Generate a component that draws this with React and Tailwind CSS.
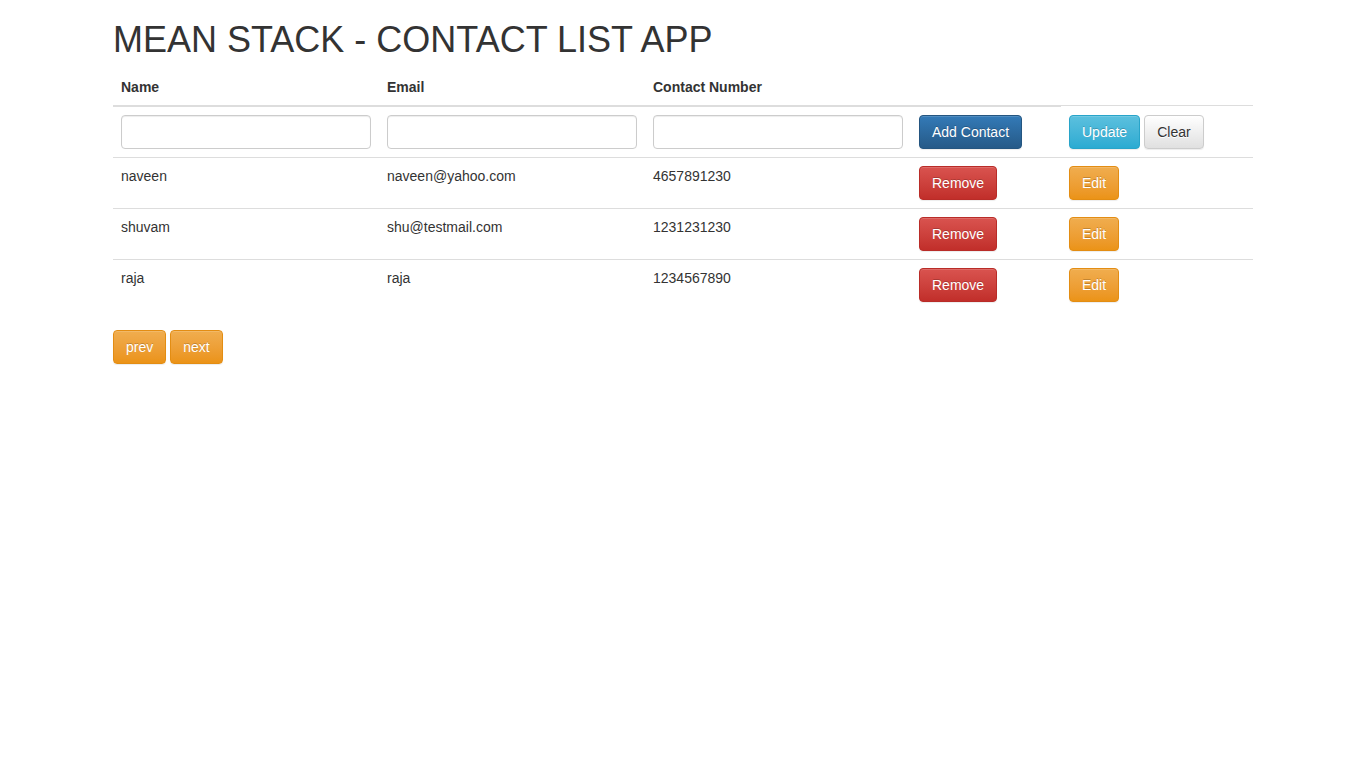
import { useState } from 'react'

const contacts = [
  { name: 'naveen', email: 'naveen@yahoo.com', number: '4657891230' },
  { name: 'shuvam', email: 'shu@testmail.com', number: '1231231230' },
  { name: 'raja', email: 'raja', number: '1234567890' },
]

const btnBase =
  'inline-block px-3 py-[6px] text-sm leading-5 border rounded-[4px] whitespace-nowrap align-middle shadow-[inset_0_1px_0_rgba(255,255,255,0.15),0_1px_1px_rgba(0,0,0,0.075)]'

const btnPrimary = `${btnBase} text-white bg-gradient-to-b from-[#337ab7] to-[#265a88] border-[#245580] [text-shadow:0_-1px_0_rgba(0,0,0,0.2)]`
const btnDanger = `${btnBase} text-white bg-gradient-to-b from-[#d9534f] to-[#c12e2a] border-[#b92c28] [text-shadow:0_-1px_0_rgba(0,0,0,0.2)]`
const btnWarning = `${btnBase} text-white bg-gradient-to-b from-[#f0ad4e] to-[#eb9316] border-[#e38d13] [text-shadow:0_-1px_0_rgba(0,0,0,0.2)]`
const btnInfo = `${btnBase} text-white bg-gradient-to-b from-[#5bc0de] to-[#2aabd2] border-[#28a4c9] [text-shadow:0_-1px_0_rgba(0,0,0,0.2)]`
const btnDefault = `${btnBase} text-[#333] bg-gradient-to-b from-white to-[#e0e0e0] border-[#ccc] [text-shadow:0_1px_0_#fff]`

const input =
  'block w-full h-[34px] px-3 py-[6px] text-sm text-[#555] bg-white border border-[#ccc] rounded-[4px] shadow-[inset_0_1px_1px_rgba(0,0,0,0.075)] outline-none'

const td = 'p-2 align-top leading-5 border-t border-[#ddd]'
const th = 'p-2 text-left leading-5 font-bold align-bottom border-b-2 border-[#ddd]'

export default function App() {
  const [form, setForm] = useState({ name: '', email: '', number: '' })

  return (
    <div className="min-h-screen bg-white text-sm text-[#333] font-['Liberation_Sans',Arial,sans-serif]">
      <div className="w-[1170px] mx-auto px-[15px]">
        {/* Heading */}
        <h1 className="mt-5 mb-[9px] text-[36px] leading-[1.1] font-normal">
          MEAN STACK - CONTACT LIST APP
        </h1>

        <table className="w-full mb-5 border-collapse">
          <thead>
            <tr>
              <th className={`w-[266px] ${th}`}>Name</th>
              <th className={`w-[266px] ${th}`}>Email</th>
              <th className={`w-[266px] ${th}`}>Contact Number</th>
              <th className={`w-[150px] ${th}`}></th>
            </tr>
          </thead>
          <tbody>
            <tr>
              <td className={td}>
                <input
                  className={input}
                  value={form.name}
                  onChange={(e) => setForm({ ...form, name: e.target.value })}
                />
              </td>
              <td className={td}>
                <input
                  className={input}
                  value={form.email}
                  onChange={(e) => setForm({ ...form, email: e.target.value })}
                />
              </td>
              <td className={td}>
                <input
                  className={input}
                  value={form.number}
                  onChange={(e) => setForm({ ...form, number: e.target.value })}
                />
              </td>
              <td className={td}>
                <button className={btnPrimary}>Add Contact</button>
              </td>
              <td className={td}>
                <div className="flex gap-1 pt-px">
                  <button className={btnInfo}>Update</button>
                  <button className={btnDefault}>Clear</button>
                </div>
              </td>
            </tr>
            {contacts.map((c) => (
              <tr key={c.name}>
                <td className={td}>{c.name}</td>
                <td className={td}>{c.email}</td>
                <td className={td}>{c.number}</td>
                <td className={td}>
                  <button className={btnDanger}>Remove</button>
                </td>
                <td className={td}>
                  <button className={btnWarning}>Edit</button>
                </td>
              </tr>
            ))}
          </tbody>
        </table>

        {/* Paging */}
        <div className="flex gap-1">
          <button className={btnWarning}>prev</button>
          <button className={btnWarning}>next</button>
        </div>
      </div>
    </div>
  )
}
